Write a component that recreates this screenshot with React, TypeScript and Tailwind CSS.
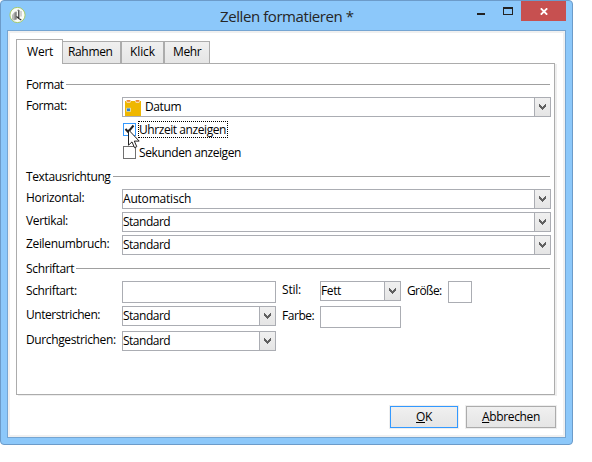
import React from "react";

function Chevron() {
  return (
    <svg width="7" height="6" viewBox="0 0 7 6" shapeRendering="crispEdges" fill="#606060">
      <path d="M0 0h1v1h1v1h1v1h1v-1h1v-1h1v-1h1v3h-1v1h-1v1h-1v1h-1v-1h-1v-1h-1v-1h-1z" />
    </svg>
  );
}

function Select({ className, children }: { className: string; children: React.ReactNode }) {
  return (
    <div className={`flex h-5 shrink-0 border border-[#abadb3] bg-white ${className}`}>
      <div className="flex flex-1 items-center leading-4">{children}</div>
      <div className="box-content flex w-[15px] items-center justify-center border-l border-[#abadb3] bg-linear-to-b from-[#f0f0f0] to-[#e5e5e5]">
        <Chevron />
      </div>
    </div>
  );
}

function Heading({ children, className }: { children: string; className: string }) {
  return (
    <div className="flex h-[17px] items-center">
      <span className={`shrink-0 leading-[17px] ${className}`}>{children}</span>
      <div className="h-px flex-1 bg-[#a0a0a0]" />
    </div>
  );
}

function Label({ children, className }: { children: string; className: string }) {
  return <span className={`shrink-0 leading-4 whitespace-nowrap ${className}`}>{children}</span>;
}

function Standard() {
  return <span className="tracking-[-0.5px]">Standard</span>;
}

function CalendarIcon() {
  return (
    <svg width="16" height="17" viewBox="0 0 16 17" className="mr-1 ml-0.5 shrink-0">
      <path d="M0 2h16v15H0z" fill="#efb700" />
      <path d="M1 1h5v1.5l-1 1.5h-3l-1-1.5zM10 1h5v1.5l-1 1.5h-3l-1-1.5z" fill="#f9d9a0" />
      <path d="M2 1h3v1.8h-3zM11 1h3v1.8h-3z" fill="#ec8a3b" />
      <path d="M1.3 8.8h4.6v4H1.3z" fill="#e3dfb8" />
      <path d="M2 9.5h3v2.6H2z" fill="#2f7fd0" />
    </svg>
  );
}

function AppIcon() {
  return (
    <svg width="17" height="17" viewBox="0 0 17 17">
      <circle cx="8.5" cy="8" r="7.6" fill="#fafcf7" stroke="#a5ca68" strokeWidth="1" />
      <path d="M3 8l3-3.5 2 .2v7.8l-3 1-2-1z" fill="#b9bbb8" />
      <path d="M5.5 6l2-1.5V12l-2 1z" fill="#858585" />
      <path d="M9.8 3v8M7.5 9.5l2.3 2 2.5 1.5" stroke="#333" strokeWidth="1.2" fill="none" />
      <path d="M8 3.5l2-.8M12 4v5.5" stroke="#999" strokeWidth=".8" />
    </svg>
  );
}

function Cursor() {
  return (
    <svg width="12" height="20" viewBox="0 0 12 20" className="absolute top-[5px] left-[4px] z-10">
      <path d="M.5.8v15.4l3.5-3.3 2.5 5.8 2.3-1-2.5-5.6h4.9z" fill="#fff" stroke="#222" strokeWidth="1" />
    </svg>
  );
}

export default function App() {
  return (
    <div className="h-[462px] w-[592px] overflow-hidden bg-white font-['Open_Sans','Noto_Sans',sans-serif] text-[12px] text-black">
      <div className="flex h-[445px] w-[573px] flex-col rounded-[4px] border border-[#6c9bc9] bg-[#8cc8fa]">
        <div className="flex h-[29px] shrink-0 items-start">
          <div className="w-[219px] pt-1.5 pl-2"><AppIcon /></div>
          <div className="w-[257px] pt-[4px] text-[15px] leading-[22px] tracking-[-0.42px] whitespace-nowrap text-[#262626]">Zellen formatieren *</div>
          <div className="mt-3 h-0.5 w-2 bg-[#222]" />
          <div className="mt-1.5 ml-[18px] h-2 w-2.5 border border-t-2 border-[#222]" />
          <div className="ml-2 flex h-5 w-[45px] items-center justify-center bg-[#c75050]">
            <svg width="8" height="7" viewBox="0 0 8 7"><path d="M.8.3l6.4 6.4M7.2.3L.8 6.7" stroke="#fff" strokeWidth="1.8" /></svg>
          </div>
        </div>
        <div className="ml-1.5 flex h-[408px] w-[559px] shrink-0 flex-col border border-[#75a5d2] bg-white">
          <div className="flex flex-1 flex-col border-2 border-[#f0f0f0] pt-1.5 pl-1.5">
            <div className="relative z-10 -mb-px flex h-[25px] items-end">
              <div className="h-[25px] w-[47px] border border-b-0 border-[#acacac] bg-white pt-1 pl-2.5 leading-4 tracking-[-0.2px]">Wert</div>
              <div className="h-[23px] w-[58px] border border-l-0 border-[#acacac] bg-linear-to-b from-[#f0f0f0] to-[#e5e5e5] pt-0.5 pl-[5px] leading-4 tracking-[-0.35px]">Rahmen</div>
              <div className="h-[23px] w-[43px] border border-[#acacac] bg-linear-to-b from-[#f0f0f0] to-[#e5e5e5] pt-0.5 pl-2 leading-4 tracking-[-0.1px]">Klick</div>
              <div className="h-[23px] w-[46px] border border-[#acacac] bg-linear-to-b from-[#f0f0f0] to-[#e5e5e5] pt-0.5 pl-2 leading-4 tracking-[-0.4px]">Mehr</div>
            </div>
            <div className="h-[332px] w-[539px] shrink-0 border border-[#acacac] bg-white pt-3 pr-1 pl-[9px] shadow-[2px_1px_0_#eeeeee]">
              <Heading className="w-10 tracking-[-0.45px]">Format</Heading>
              <div className="mt-1 flex h-5">
                <Label className="mt-px w-24 tracking-[-0.4px]">Format:</Label>
                <Select className="w-[429px]"><CalendarIcon /><span className="tracking-[-0.4px]">Datum</span></Select>
              </div>
              <div className="mt-1 ml-[97px] flex h-[17px] items-center">
                <div className="relative h-[13px] w-[13px] border border-[#3399ff]">
                  <svg width="11" height="11" viewBox="0 0 11 11"><path d="M1.5 5l2.7 3L9.5 1.5" stroke="#222" strokeWidth="2" fill="none" /></svg>
                  <Cursor />
                </div>
                <span className="ml-0.5 h-[17px] w-[90px] border border-dotted border-black leading-[16px] tracking-[-0.43px] whitespace-nowrap">Uhrzeit anzeigen</span>
              </div>
              <div className="mt-1.5 ml-[97px] flex h-[17px] items-center">
                <div className="h-[13px] w-[13px] border border-[#707070]" />
                <span className="ml-[3px] tracking-[-0.41px] whitespace-nowrap">Sekunden anzeigen</span>
              </div>
              <div className="mt-[7px]"><Heading className="w-[87px] tracking-[-0.38px]">Textausrichtung</Heading></div>
              <div className="mt-1 flex h-5">
                <Label className="mt-px w-24 tracking-[-0.26px]">Horizontal:</Label>
                <Select className="w-[429px]"><span className="tracking-[-0.2px]">Automatisch</span></Select>
              </div>
              <div className="mt-[3px] flex h-5">
                <Label className="mt-px w-24 tracking-[-0.38px]">Vertikal:</Label>
                <Select className="w-[429px]"><Standard /></Select>
              </div>
              <div className="mt-[3px] flex h-5">
                <Label className="mt-px w-24 tracking-[-0.35px]">Zeilenumbruch:</Label>
                <Select className="w-[429px]"><Standard /></Select>
              </div>
              <div className="mt-[5px]"><Heading className="w-[50px] tracking-[-0.35px]">Schriftart</Heading></div>
              <div className="mt-1 flex h-[25px] items-start">
                <Label className="mt-0.5 w-24 tracking-[-0.38px]">Schriftart:</Label>
                <div className="h-[22px] w-[154px] border border-[#abadb3]" />
                <Label className="mt-px ml-1.5 w-[38px] tracking-[-0.2px]">Stil:</Label>
                <Select className="w-[81px]"><span className="tracking-[-0.4px]">Fett</span></Select>
                <Label className="mt-0.5 ml-1.5 w-[41px] tracking-[-0.6px]">Größe:</Label>
                <div className="h-[22px] w-6 border border-[#abadb3]" />
              </div>
              <div className="flex h-[25px] items-start">
                <Label className="mt-px w-24 tracking-[-0.45px]">Unterstrichen:</Label>
                <Select className="w-[154px]"><Standard /></Select>
                <Label className="mt-0.5 ml-1.5 w-[38px] tracking-[-0.45px]">Farbe:</Label>
                <div className="h-[22px] w-[81px] border border-[#abadb3]" />
              </div>
              <div className="flex items-start">
                <Label className="mt-px w-24 tracking-[-0.37px]">Durchgestrichen:</Label>
                <Select className="w-[154px]"><Standard /></Select>
              </div>
            </div>
            <div className="mt-[11px] flex justify-end gap-2 pr-[7px]">
              <button className="h-[22px] w-[68px] border border-[#3399ff] bg-linear-to-b from-[#f0f0f0] to-[#e5e5e5] leading-5 tracking-[-0.4px] shadow-[0_0_0_1px_#eeeeee]"><u>O</u>K</button>
              <button className="h-[22px] w-[90px] border border-[#acacac] bg-linear-to-b from-[#f0f0f0] to-[#e5e5e5] leading-5 tracking-[-0.35px] shadow-[0_0_0_1px_#eeeeee]"><u>A</u>bbrechen</button>
            </div>
          </div>
        </div>
      </div>
    </div>
  );
}
